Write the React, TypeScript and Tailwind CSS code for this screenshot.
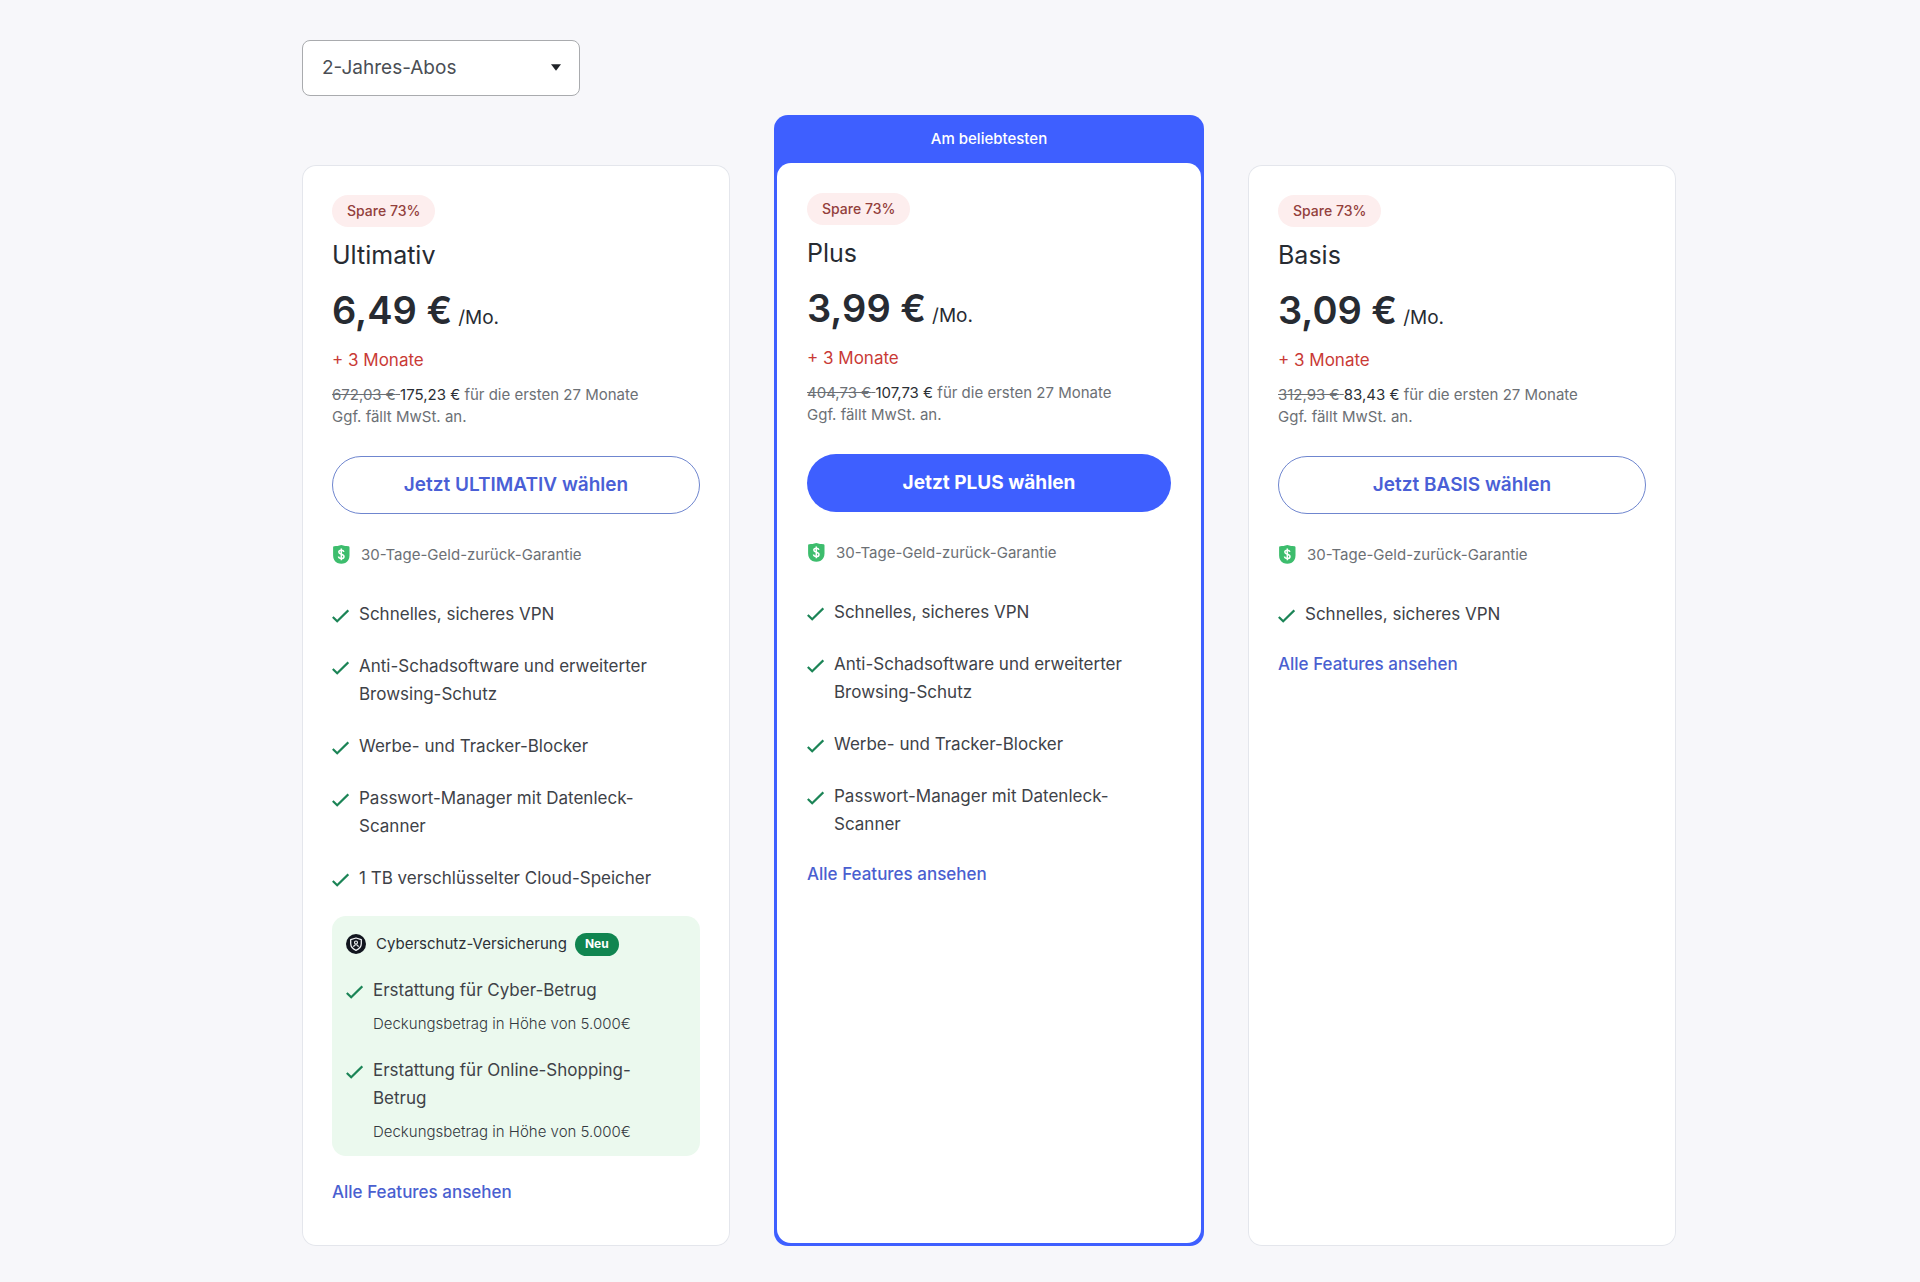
import React from 'react'

type Plan = {
  name: string
  price: string
  oldTotal: string
  total: string
  features: string[]
  popular?: boolean
  insurance?: boolean
}

const FEATURES = [
  'Schnelles, sicheres VPN',
  'Anti-Schadsoftware und erweiterter Browsing-Schutz',
  'Werbe- und Tracker-Blocker',
  'Passwort-Manager mit Datenleck-Scanner',
  '1 TB verschlüsselter Cloud-Speicher',
]

const COVERAGE = ['Erstattung für Cyber-Betrug', 'Erstattung für Online-Shopping-Betrug']

const PLANS: Plan[] = [
  { name: 'Ultimativ', price: '6,49 €', oldTotal: '672,03 €', total: '175,23 €', features: FEATURES, insurance: true },
  { name: 'Plus', price: '3,99 €', oldTotal: '404,73 €', total: '107,73 €', features: FEATURES.slice(0, 4), popular: true },
  { name: 'Basis', price: '3,09 €', oldTotal: '312,93 €', total: '83,43 €', features: FEATURES.slice(0, 1) },
]

function Check() {
  return (
    <svg className="mt-2 h-4 w-[17px] shrink-0" viewBox="0 0 17 16" fill="none" stroke="#1b8456" strokeWidth="2.2" aria-hidden="true">
      <path d="M.8 9 5.2 13.3 16.3 2.4" />
    </svg>
  )
}

function MoneyShield() {
  return (
    <svg className="h-5 w-[18px] shrink-0" viewBox="0 0 18 20" aria-hidden="true">
      <path
        d="M9.300 0c2.800.8 5 1.200 7 1.200.7 0 1.200.5 1.200 1.200V10.500c0 3.600-1.600 6.200-4.300 7.500-1.300.6-2.600.8-3.900.8s-2.600-.2-3.900-.8C2.700 16.700 1.100 14.100 1.100 10.500V2.400c0-.7.5-1.200 1.200-1.200C4.300 1.200 6.500.8 9.300 0Z"
        fill="#3dbd6d"
      />
      <path
        d="M11.900 6.900C11.600 5.700 10.600 5.200 9.300 5.200c-1.500 0-2.500.7-2.500 1.900 0 2.800 5.200 1.400 5.200 4.300 0 1.300-1.100 2.100-2.700 2.100-1.500 0-2.600-.7-2.800-2M9.300 3.400v11.800"
        fill="none"
        stroke="#fff"
        strokeWidth="1.5"
      />
    </svg>
  )
}

function InsuranceIcon() {
  return (
    <svg className="size-5 shrink-0" viewBox="0 0 20 20" aria-hidden="true">
      <circle cx="10" cy="10" r="10" fill="#12161f" />
      <path d="M10 4 15.300 5.600v4c0 3.100-2 5.400-5.300 6.800-3.300-1.400-5.300-3.700-5.300-6.800v-4Z" fill="none" stroke="#f1f3f5" strokeWidth="1.3" strokeLinejoin="round" />
      <circle cx="10" cy="8.500" r="1.500" fill="none" stroke="#f1f3f5" strokeWidth="1.1" />
      <path d="M7.600 12.900c.2-1.500 1.100-2.200 2.400-2.200s2.200.7 2.400 2.200" fill="none" stroke="#f1f3f5" strokeWidth="1.1" />
    </svg>
  )
}

function Insurance() {
  return (
    <section className="mt-6 rounded-[14px] bg-[#ebf9ee] px-3.5 pt-3.5 pb-3">
      <div className="flex h-7 items-center">
        <InsuranceIcon />
        <h3 className="ml-2.5 text-[15px] text-[#2b3036]">Cyberschutz-Versicherung</h3>
        <span className="ml-2 flex h-[23px] items-center rounded-full bg-[#108550] px-2.5 text-xs font-bold text-white">Neu</span>
      </div>
      <ul className="mt-[18px] flex flex-col gap-5 pr-4">
        {COVERAGE.map((item) => (
          <li key={item} className="flex gap-2.5">
            <Check />
            <div>
              <p className="text-[17px] leading-7 text-[#3e4248]">{item}</p>
              <p className="mt-2 text-[15px] leading-6 font-light text-[#33383e]">Deckungsbetrag in Höhe von 5.000€</p>
            </div>
          </li>
        ))}
      </ul>
    </section>
  )
}

function PlanBody({ plan }: { plan: Plan }) {
  return (
    <div className="flex flex-col items-stretch p-[30px] pb-10">
      <span className="flex h-8 items-center self-start rounded-full bg-[#fdeeee] px-[15px] text-sm font-medium text-[#93403c]">
        Spare 73%
      </span>
      <h2 className="mt-3 text-[25px] leading-8 text-[#272b32]">{plan.name}</h2>
      <p className="mt-[15px] flex items-baseline gap-1.5 text-[#272b32]">
        <span className="text-[38px] leading-[48px] font-semibold">{plan.price}</span>
        <span className="text-[19px] leading-6">/Mo.</span>
      </p>
      <p className="mt-3.5 text-[17px] leading-6 text-[#c93a36]">+ 3 Monate</p>
      <p className="mt-3 text-[15px] leading-[22px] text-[#6c7075]">
        <s>{plan.oldTotal} </s>
        <span className="text-[#2b2f35]">{plan.total}</span> für die ersten 27 Monate
        <br />
        Ggf. fällt MwSt. an.
      </p>
      <button
        type="button"
        className={
          plan.popular
            ? 'mt-7 h-[58px] rounded-full bg-[#3e5fff] text-[19px] font-bold text-white'
            : 'mt-7 h-[58px] rounded-full border border-[#6f86cf] bg-white text-[19px] font-semibold text-[#4a5fd6]'
        }
      >
        Jetzt {plan.name.toUpperCase()} wählen
      </button>
      <p className="mt-[29px] flex items-center gap-[11px] text-[15px] leading-6 text-[#6c7075]">
        <MoneyShield />
        30-Tage-Geld-zurück-Garantie
      </p>
      <ul className="mt-[33px] flex flex-col gap-6 pr-5">
        {plan.features.map((feature) => (
          <li key={feature} className="flex gap-2.5 text-[17px] leading-7 text-[#3e4248]">
            <Check />
            <span>{feature}</span>
          </li>
        ))}
      </ul>
      {plan.insurance && <Insurance />}
      <a href="#features" className="mt-[22px] self-start text-[17px] leading-7 font-medium text-[#4a5fd0]">
        Alle Features ansehen
      </a>
    </div>
  )
}

function PlanCard({ plan }: { plan: Plan }) {
  if (plan.popular) {
    return (
      <article className="flex flex-col rounded-[14px] bg-[#3e5fff] px-[3px] pb-[3px]">
        <p className="flex h-12 items-center justify-center text-[15px] font-medium text-white">Am beliebtesten</p>
        <div className="grow rounded-[14px] bg-white">
          <PlanBody plan={plan} />
        </div>
      </article>
    )
  }
  return (
    <article className="mt-[50px] rounded-[14px] bg-white ring-1 ring-[#e4e6ec] ring-inset">
      <PlanBody plan={plan} />
    </article>
  )
}

export default function App() {
  return (
    <main className="min-h-screen bg-[#f7f7fa] pt-10 pr-[244px] pb-9 pl-[302px] font-['Inter',sans-serif]">
      <div className="relative w-[278px]">
        <select
          aria-label="Abo-Laufzeit"
          className="h-14 w-full appearance-none rounded-lg border border-[#a9abae] bg-white pr-12 pl-[19px] text-[19px] text-[#4a4e54]"
        >
          <option>2-Jahres-Abos</option>
        </select>
        <svg className="pointer-events-none absolute top-6 right-[19px] h-[7px] w-2.5" viewBox="0 0 10 7" fill="#202428" aria-hidden="true">
          <path d="M0 .3H10L5 6.700Z" />
        </svg>
      </div>
      <div className="mt-[19px] grid grid-cols-[428fr_430fr_428fr] gap-11">
        {PLANS.map((plan) => (
          <PlanCard key={plan.name} plan={plan} />
        ))}
      </div>
    </main>
  )
}
